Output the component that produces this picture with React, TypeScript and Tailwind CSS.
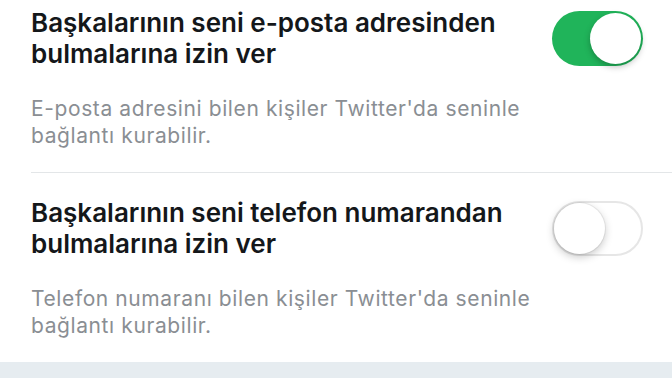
import React, { useState } from 'react';

function Toggle({ on, onClick }: { on: boolean; onClick: () => void }) {
  return (
    <button
      onClick={onClick}
      className={
        on
          ? 'relative shrink-0 w-[91px] h-[55px] rounded-full bg-[#20b45a]'
          : 'relative shrink-0 w-[91px] h-[55px] rounded-full bg-white border-2 border-[#e6e6e6]'
      }
    >
      <span
        className={
          on
            ? 'absolute top-[2px] right-[2px] w-[51px] h-[51px] rounded-full bg-white shadow-[0_3px_6px_rgba(0,0,0,0.25)]'
            : 'absolute top-0 left-0 w-[51px] h-[51px] rounded-full bg-white shadow-[0_3px_8px_rgba(0,0,0,0.22),0_0_0_1px_rgba(0,0,0,0.06)]'
        }
      />
    </button>
  );
}

export default function App() {
  const [email, setEmail] = useState(true);
  const [phone, setPhone] = useState(false);

  return (
    <div className="w-[672px] h-[378px] bg-white overflow-hidden font-['Inter',sans-serif]">
      <div className="ml-[31px] pr-[29px] pt-[7px] pb-[23px] border-b border-[#e3e6e8]">
        <div className="flex items-center gap-4">
          <h2 className="flex-1 text-[26px] leading-[31px] font-semibold text-[#14171a]">
            Başkalarının seni e-posta adresinden bulmalarına izin ver
          </h2>
          <Toggle on={email} onClick={() => setEmail(!email)} />
        </div>
        <p className="mt-[26px] max-w-[510px] text-[21px] leading-[27px] tracking-[0.6px] text-[#8a8e93]">
          E-posta adresini bilen kişiler Twitter'da seninle bağlantı kurabilir.
        </p>
      </div>

      <div className="ml-[31px] pr-[29px] pt-[24px] pb-[23px]">
        <div className="flex items-center gap-4">
          <h2 className="flex-1 text-[26px] leading-[31px] font-semibold text-[#14171a]">
            Başkalarının seni telefon numarandan bulmalarına izin ver
          </h2>
          <Toggle on={phone} onClick={() => setPhone(!phone)} />
        </div>
        <p className="mt-[26px] max-w-[510px] text-[21px] leading-[27px] tracking-[0.6px] text-[#8a8e93]">
          Telefon numaranı bilen kişiler Twitter'da seninle bağlantı kurabilir.
        </p>
      </div>

      <div className="h-[20px] bg-[#e6ecf0]" />
    </div>
  );
}
